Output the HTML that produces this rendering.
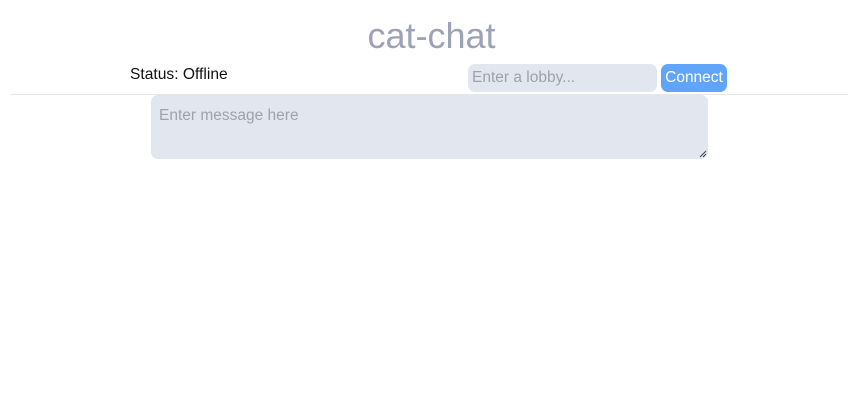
<!DOCTYPE html>
<html><head><style>
body{margin:0;background:#fff;font-family:"Liberation Sans",sans-serif;width:863px;height:419px;position:relative;overflow:hidden}
.t{position:absolute;left:0;width:863px;top:14px;text-align:center;font-size:36px;color:#9ca3b4;line-height:44px}
.s{position:absolute;left:130px;top:66px;font-size:15.6px;color:#111}
.l{position:absolute;left:468px;top:64px;width:189px;height:28px;background:#e2e6ee;border-radius:7px;font-size:15.5px;color:#9ca3af;line-height:28px;padding-left:4px;box-sizing:border-box}
.c{position:absolute;left:661px;top:64px;width:66px;height:28px;background:#60a5fa;border-radius:7px;color:#fff;font-size:15.5px;line-height:28px;text-align:center}
.hr{position:absolute;left:10px;top:94px;width:838px;height:1px;background:#e5e7eb}
.m{position:absolute;left:151px;top:95px;width:557px;height:64px;background:#e2e6ee;border-radius:7px;font-size:15.5px;color:#9ca3af;padding:12px 8px;box-sizing:border-box}
</style></head><body>
<div class="t">cat-chat</div>
<div class="s">Status: Offline</div>
<div class="l">Enter a lobby...</div>
<div class="c">Connect</div>
<div class="hr"></div>
<div class="m">Enter message here</div>
<svg style="position:absolute;left:699px;top:150px" width="8" height="8"><path d="M1 7L7 1M4 7L7 4" stroke="#444" stroke-width="1"/></svg>
</body></html>
